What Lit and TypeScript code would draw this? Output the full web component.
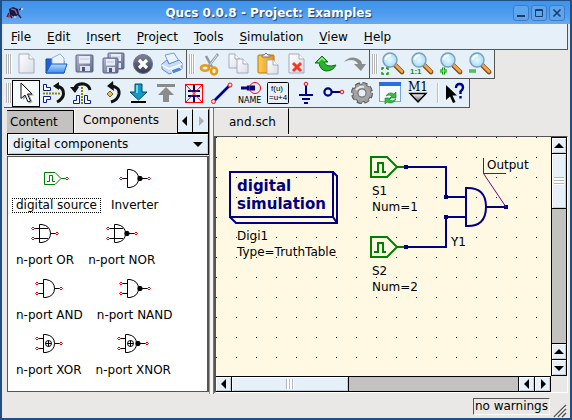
import { LitElement, html, css, svg } from "lit";
import { customElement, property, state } from "lit/decorators.js";
import { classMap } from "lit/directives/class-map.js";

type Tool = { name: string; art: unknown };

const lens = (mark: unknown) => svg`
  <path d="M14 13 L21 20" stroke="#8a4a10" stroke-width="4.6" stroke-linecap="round"/>
  <path d="M14.500 13 L21 19.500" stroke="#f0a848" stroke-width="2.600" stroke-linecap="round"/>
  <circle cx="9" cy="8" r="7" fill="url(#glass)" stroke="#7d9db8" stroke-width="1.400"/>
  <path d="M4.500 8 A5 5 0 0 1 10 3.500" fill="none" stroke="#fff" stroke-width="2"/>
  ${mark}`;

const sheet = (x: number, y: number, w: number, h: number) => svg`
  <path d="M${x} ${y} h${w - 5} l5 5 v${h - 5} h${-w} z" fill="url(#paper)" stroke="#a3a9c2" stroke-width="1"/>
  <path d="M${x + w - 5} ${y} v5 h5" fill="#fff" stroke="#a3a9c2" stroke-width="1"/>`;

const floppy = (x: number, y: number, s: number) => svg`
  <rect x="${x}" y="${y}" width="${s}" height="${s}" rx="1" fill="url(#steel)" stroke="#5c6488"/>
  <rect x="${x + 3}" y="${y + 1}" width="${s - 6}" height="${s / 2 - 1}" fill="#e9ecf6"/>
  <path d="M${x + 4} ${y + 4} h${s - 8}" stroke="#c0c5d8"/>
  <rect x="${x + 4}" y="${y + s - 6}" width="${s - 7}" height="5" fill="#dfe2ee"/>
  <rect x="${x + 6}" y="${y + s - 5}" width="3" height="4" fill="#4c5478"/>`;

const fileTools: Tool[] = [
  { name: "New", art: sheet(4, 2, 15, 19) },
  { name: "Open", art: svg`
      <path d="M2 21 V7 h6 l2 2 h10 v12 z" fill="#1f62d8" stroke="#1648a8"/>
      <path d="M8 6 L16 2 L20 6 V15 H8 z" fill="#eef4ff" stroke="#94aede"/>
      <path d="M2 21 L7 12 H23 L20 21 z" fill="url(#folder)" stroke="#1c56c4"/>` },
  { name: "Save", art: floppy(3, 3, 17) },
  { name: "Save all", art: svg`${floppy(6, 1, 16)}${floppy(1, 6, 15)}` },
  { name: "Close", art: svg`
      <circle cx="12" cy="12" r="9.500" fill="url(#dark)" stroke="#6e7388"/>
      <path d="M8 8 L16 16 M16 8 L8 16" stroke="#fff" stroke-width="3.200"/>` },
  { name: "Print", art: svg`
      <path d="M5 3 L14 1 L19 9 L9 12 z" fill="#eaf4ff" stroke="#6f9de0"/>
      <path d="M2 12 L7 8 L9 12 L19 8 L22 11 V17 L9 22 L2 17 z" fill="#c6dcfa" stroke="#6488d0"/>
      <path d="M2 13 L9 17 L22 12" fill="none" stroke="#fff" stroke-width="1.500"/>
      <path d="M11 18 L19 15 L23 18 L13 22 z" fill="#4d86e8" stroke="#fff"/>` },
];

const editTools: Tool[] = [
  { name: "Cut", art: svg`
      <path d="M8 4 L14 15 M20 2 L10 15" stroke="#8e98a8" stroke-width="2.600"/>
      <path d="M19 3 L12 13" stroke="#e2e8f0" stroke-width="1"/>
      <ellipse cx="7" cy="16" rx="4" ry="2.800" fill="none" stroke="#e89a10" stroke-width="2.600"/>
      <ellipse cx="16" cy="19" rx="3" ry="3.500" fill="none" stroke="#e89a10" stroke-width="2.600"/>` },
  { name: "Copy", art: svg`${sheet(2, 2, 11, 14)}${sheet(10, 7, 11, 14)}` },
  { name: "Paste", art: svg`
      <rect x="2" y="3" width="16" height="18" rx="1" fill="url(#gold)" stroke="#b87408"/>
      <path d="M6 5 V3 h2 l2 -2 l2 2 h2 v2 z" fill="#eee" stroke="#777"/>
      ${sheet(11, 8, 11, 14)}` },
  { name: "Delete", art: svg`${sheet(4, 2, 15, 19)}
      <path d="M8 11 L16 19 M16 11 L8 19" stroke="#f43a22" stroke-width="3"/>` },
  { name: "Undo", art: svg`
      <path d="M1 11 L8 4 L14 10 H10 Q12 16 22 13 Q19 19 12 19 Q6 18 5 11 z" fill="#28b428" stroke="#0b6e14"/>
      <path d="M4 10 L8 6 L11 9" fill="none" stroke="#98ee88" stroke-width="1.500"/>` },
  { name: "Redo", art: svg`
      <path d="M1 10 Q6 4 13 6 Q19 8 19 12 H23 L18 19 L11 12 H15 Q13 8 8 8 Q4 8 1 10 z" fill="#8c8c8c"/>` },
];

const green = (d: string) => svg`
  <path d="${d}" fill="none" stroke="#0a9a0a" stroke-width="3"/>
  <path d="${d}" fill="none" stroke="#8cf08c" stroke-width="1"/>`;

const zoomTools: Tool[] = [
  { name: "View all", art: lens(svg`<path d="M1 18 V16 H3 M5 16 H7 V18 M7 20 V22 H5 M3 22 H1 V20" fill="none" stroke="#0a9a0a" stroke-width="1.400"/>`) },
  { name: "View 1:1", art: lens(svg`<text class="ratio" x="0" y="22">1:1</text>`) },
  { name: "Zoom in", art: lens(green("M1 19 H8 M4.500 15.500 V22.500")) },
  { name: "Zoom out", art: lens(green("M1 19 H8")) },
];

const drawTools: Tool[] = [
  { name: "Select", art: svg`
      <path d="M8 2 V18 L11.500 14.500 L14.500 21.500 L17.500 20 L14.500 13.500 H19 z" fill="#555" opacity=".5" transform="translate(1 1)"/>
      <path d="M7 2 V17.500 L11 14 L14 21 L16.500 20 L13.500 13 H18 z" fill="#fff" stroke="#111"/>` },
  { name: "Mirror about X axis", art: svg`
      <path d="M1.500 3.500 h3 v3 h4 v3 H1.500 z M1.500 15.500 h7 v3 H4.500 v3 H1.500 z" fill="#fff" stroke="#0a1c9c" stroke-width="1"/>
      <path d="M1 12.500 H18" stroke="#8a8600" stroke-width="2" stroke-dasharray="2 1"/>
      <path d="M14 5 Q22 6 21.500 13 Q21 18 15 21" fill="none" stroke="#111" stroke-width="3"/>
      <path d="M17 1 L11 5 L17 9 z" fill="#111"/>` },
  { name: "Mirror about Y axis", art: svg`
      <path d="M3.500 22.500 v-3 h3 v-5 h3 v8 z M14.500 22.500 v-8 h3 v5 h3 v3 z" fill="#fff" stroke="#0a1c9c" stroke-width="1"/>
      <path d="M12 6 V23" stroke="#8a8600" stroke-width="2" stroke-dasharray="2 1"/>
      <path d="M4 9 Q6 2 14 3 Q19 4 20 9" fill="none" stroke="#111" stroke-width="3"/>
      <path d="M0 6 H9 L5 12 z" fill="#111"/>` },
  { name: "Rotate", art: svg`
      <path d="M13 5 Q22 6 21 13 Q20 19 13 21" fill="none" stroke="#111" stroke-width="3"/>
      <path d="M15 0 L9 5 L16 10 z" fill="#111"/>
      <path d="M12 10 L15 13 L12 16 L9 13 z" fill="#e4c060" stroke="#7a5c10"/>` },
  { name: "Into subcircuit", art: svg`
      <path d="M9 3 H16 V11 H21 L12.500 19 L4 11 H9 z" fill="#109ac8" stroke="#064860"/>
      <path d="M11 4 V12" stroke="#68d8f4" stroke-width="2"/>
      <path d="M5 21 H20" stroke="#000" stroke-width="2"/>` },
  { name: "Pop out", art: svg`<path d="M3 3 H21 V6 H3 z M12 6 L20 14 H15 V21 H9 V14 H4 z" fill="#8b8b8b"/>` },
  { name: "Deactivate", art: svg`
      <path d="M12 3 V10 M12 15 V22 M6 10 H18 M6 15 H18" stroke="#000080" stroke-width="2"/>
      <rect x="3.500" y="3.500" width="17" height="18" fill="none" stroke="#f00"/>
      <path d="M3.500 3.500 L20.500 21.500 M20.500 3.500 L3.500 21.500" stroke="#f00"/>` },
  { name: "Wire", art: svg`
      <path d="M4 20 L20 4" stroke="#000090" stroke-width="2.600"/>
      <circle cx="3.500" cy="20.500" r="2" fill="#fff" stroke="#f00"/>
      <circle cx="20" cy="4" r="2" fill="#fff" stroke="#f00"/>` },
  { name: "Wire label", art: svg`
      <path d="M3 7 H11" stroke="#000080" stroke-width="3"/>
      <path d="M9 7 H17" stroke="#000080" stroke-width="5"/>
      <circle cx="17" cy="7" r="5.500" fill="none" stroke="#f00"/>
      <text class="tiny" x="0" y="22">NAME</text>` },
  { name: "Equation", art: svg`
      <rect x="1.500" y="1.500" width="21" height="21" rx="1" fill="none" stroke="#000" stroke-width="1"/>
      <text class="formula" x="5" y="10">f(u)</text>
      <text class="formula" x="3" y="19">=u+4</text>` },
  { name: "Ground", art: svg`
      <path d="M12 4 V14 M5 14 H19 M8 18 H16 M10 22 H14" stroke="#000090" stroke-width="2"/>
      <circle cx="12" cy="3" r="1.800" fill="#fff" stroke="#f00"/>` },
  { name: "Port", art: svg`
      <circle cx="6" cy="11" r="3.600" fill="none" stroke="#000080" stroke-width="2.200"/>
      <path d="M10 11 H18" stroke="#000080" stroke-width="2"/>
      <circle cx="20" cy="11" r="1.800" fill="#fff" stroke="#f00"/>` },
  { name: "Simulate", art: svg`
      <circle cx="12" cy="12" r="9" fill="none" stroke="#555" stroke-width="4" stroke-dasharray="4.700 2.400"/>
      <circle cx="12" cy="12" r="6.500" fill="none" stroke="#666" stroke-width="6"/>
      <circle cx="12" cy="12" r="9" fill="none" stroke="#999" stroke-width="2" stroke-dasharray="4 3.100"/>
      <circle cx="12" cy="12" r="6.500" fill="none" stroke="#a4a4a4" stroke-width="4"/>
      <path d="M6 9 Q9 5 14 6" fill="none" stroke="#e6e6e6" stroke-width="2"/>` },
  { name: "View data display", art: svg`
      <rect x="1.500" y="1.500" width="21" height="19" fill="#f6faff" stroke="#7aa4e4"/>
      <rect x="1" y="1" width="22" height="4" fill="#2c6be0"/>
      <path d="M8 15 Q11 10 16 13 L18 11 V17 H12 L14 15 Q11 13 8 15 z" fill="#30c040" stroke="#0c8020" stroke-width=".6"/>
      <path d="M18 18 Q15 24 9 21 L7 23 V17 H13 L11 19 Q15 21 18 18 z" fill="#30c040" stroke="#0c8020" stroke-width=".6"/>` },
  { name: "Set marker", art: svg`
      <text class="marker" x="2" y="10">M1</text>
      <path d="M4 12.500 H20 L12 21 z" fill="url(#grey)" stroke="#000" stroke-width="1.400"/>` },
];

const helpTool: Tool = { name: "What's this", art: svg`
  <path d="M3 4 V19 L7 15.500 L10 22 L12.500 21 L9.500 14.500 H14 z" fill="#000"/>
  <path d="M13 7 Q13 3 16.500 3 Q20 3 20 6.500 Q20 8.500 17.500 10.500 V13 M17.500 15 V17.500" fill="none" stroke="#000090" stroke-width="2.400"/>` };

const defs = svg`<defs>
  <linearGradient id="paper" x1="0" y1="0" x2="1" y2="1"><stop offset="0" stop-color="#fff"/><stop offset="1" stop-color="#dcdde6"/></linearGradient>
  <linearGradient id="steel" x1="0" y1="0" x2="1" y2="1"><stop offset="0" stop-color="#b4bcd2"/><stop offset="1" stop-color="#5e6888"/></linearGradient>
  <linearGradient id="folder" x1="0" y1="0" x2="0" y2="1"><stop offset="0" stop-color="#b4dcff"/><stop offset="1" stop-color="#3c8cf0"/></linearGradient>
  <linearGradient id="dark" x1="0" y1="0" x2="0" y2="1"><stop offset="0" stop-color="#80859a"/><stop offset="1" stop-color="#34384e"/></linearGradient>
  <linearGradient id="gold" x1="0" y1="0" x2="1" y2="0"><stop offset="0" stop-color="#ffcf50"/><stop offset="1" stop-color="#e09414"/></linearGradient>
  <linearGradient id="grey" x1="0" y1="0" x2="0" y2="1"><stop offset="0" stop-color="#fff"/><stop offset="1" stop-color="#555"/></linearGradient>
  <radialGradient id="glass"><stop offset="0" stop-color="#e8faff"/><stop offset="1" stop-color="#a4dcf8"/></radialGradient>
</defs>`;

const base = css`
  :host { box-sizing: border-box; }
  *, *::before, *::after { box-sizing: border-box; }
  button, select {
    margin: 0; padding: 0; border: 0; border-radius: 0; background: none;
    color: inherit; font: inherit; appearance: none;
  }
  svg { display: block; flex: none; }
`;

@customElement("tool-strip")
export class ToolStrip extends LitElement {
  @property({ attribute: false }) tools: Tool[] = [];
  @property({ attribute: false }) extra?: Tool;
  @property() active = "";
  @property({ type: Boolean }) compact = false;

  static styles = [base, css`
    :host {
      display: flex; align-items: center; height: 29px;
      background: #e5f0f9; border-right: 1px solid #555; border-bottom: 1px solid #555;
    }
    .grip {
      width: 6px; height: 20px; margin-left: 2px;
      background: repeating-linear-gradient(to right, #b4b4b4 0 1px, #fff 1px 2px);
    }
    .tool { display: grid; place-items: center; width: 29px; height: 27px; }
    .compact { width: 28px; }
    .on { background: #f4f9fd; border: 1px solid #000; }
    .rule { width: 2px; height: 20px; margin: 0 2px 0 5px; background: #b8c0c6; border-right: 1px solid #fff; }
    .tiny { font: 8px "DejaVu Sans", sans-serif; }
    .formula { font: 8px "Liberation Sans", sans-serif; }
    .ratio { font: bold 8px "Liberation Sans", sans-serif; fill: #0a9a0a; }
    .marker { font: 12px "DejaVu Serif", serif; }
  `];

  private button(t: Tool) {
    return html`<button class=${classMap({ tool: true, compact: this.compact, on: t.name === this.active })}
      aria-label=${t.name} @click=${() => this.dispatchEvent(new CustomEvent("pick", { detail: t.name }))}>
      <svg width="24" height="24" viewBox="0 0 24 24">${defs}${t.art}</svg></button>`;
  }

  render() {
    return html`<span class="grip"></span>${this.tools.map((t) => this.button(t))}
      ${this.extra ? html`<span class="rule"></span>${this.button(this.extra)}` : null}`;
  }
}

const arrows: Record<string, string> = {
  left: "M7 0 V10 L2 5 z", right: "M3 0 V10 L8 5 z", up: "M0 7 H10 L5 2 z", down: "M0 3 H10 L5 8 z",
};
const arrow = (dir: string) => html`<svg width="10" height="10" viewBox="0 0 10 10"><path d=${arrows[dir]} fill="currentColor"/></svg>`;

@customElement("scroll-strip")
export class ScrollStrip extends LitElement {
  @property({ type: Boolean, reflect: true }) vertical = false;
  @property({ type: Number }) share = 40;

  static styles = [base, css`
    :host { display: flex; height: 16px; background: #c3c2c0; border: 1px solid #000; border-left-width: 0; }
    :host([vertical]) { flex-direction: column; width: 16px; height: auto; border-left-width: 1px; border-bottom-width: 1px; }
    .step, .thumb {
      display: grid; place-items: center; background: #e5f0f9; color: #000;
      box-shadow: inset 1px 1px #fff, inset -1px -1px #c4d0d8;
    }
    .step { flex: none; width: 16px; height: 14px; border-right: 1px solid #000; }
    .step.end { border-right: 0; border-left: 1px solid #000; width: 16px; }
    .thumb { border-right: 1px solid #000; }
    .space { flex: 1; display: flex; min-width: 0; min-height: 0; }
    .ribs { width: 8px; height: 10px; background: repeating-linear-gradient(to right, #b4b8bc 0 1px, #fff 1px 3px); }
    :host([vertical]) .space { flex-direction: column; }
    :host([vertical]) .step { width: 14px; height: 16px; border-right: 0; border-bottom: 1px solid #000; }
    :host([vertical]) .step.end { border-left: 0; border-bottom: 0; border-top: 1px solid #000; height: 16px; }
    :host([vertical]) .thumb { border-right: 0; border-bottom: 1px solid #000; }
    :host([vertical]) .ribs { width: 10px; height: 8px; background: repeating-linear-gradient(#b4b8bc 0 1px, #fff 1px 3px); }
  `];

  render() {
    const [back, on] = this.vertical ? ["up", "down"] : ["left", "right"];
    return html`
      <button class="step" aria-label=${"Scroll " + back}>${arrow(back)}</button>
      <div class="space"><div class="thumb" style="flex: 0 0 ${this.share}%"><span class="ribs"></span></div></div>
      <button class="step end" aria-label=${"Page " + back}>${arrow(back)}</button>
      <button class="step end" aria-label=${"Scroll " + on}>${arrow(on)}</button>`;
  }
}

type Part = { name: string; kind: "source" | "not" | "or" | "and"; bubble?: boolean; xor?: boolean };
const parts: Part[] = [
  { name: "digital source", kind: "source" },
  { name: "Inverter", kind: "not", bubble: true },
  { name: "n-port OR", kind: "or" },
  { name: "n-port NOR", kind: "or", bubble: true },
  { name: "n-port AND", kind: "and" },
  { name: "n-port NAND", kind: "and", bubble: true },
  { name: "n-port XOR", kind: "and", xor: true },
  { name: "n-port XNOR", kind: "and", bubble: true, xor: true },
];

const pin = (x: number, y: number) => svg`<path d="M${x - 1.5} ${y} l1.500 -1.500 l1.500 1.500 l-1.500 1.500 z" fill="#fff" stroke="#f00000" stroke-width="1"/>`;

function partIcon(p: Part) {
  if (p.kind === "source") {
    return html`<svg width="26" height="20" viewBox="0 0 26 20" fill="none" stroke="#008000">
      <path d="M1.500 4.500 H12 L18 10.500 L12 16.500 H1.500 z M18 10.500 H23 M4 13.500 H6.500 V7.500 H9.500 V13.500 H12"/>${pin(24, 10.5)}</svg>`;
  }
  const end = p.bubble ? 30 : 26;
  const reach = p.kind === "or" ? 17 : 8;
  return html`<svg width=${end + 2} height="20" viewBox="0 0 ${end + 2} 20" fill="none" stroke="#000">
    <path d="M8.500 1.500 H11 Q19.500 3 19.500 10.500 Q19.500 18 11 19.500 H8.500 z"/>
    <path d=${p.kind === "not" ? "M3 10.500 H8" : `M3 5.500 H${reach} M3 15.500 H${reach}`}/>
    <path d="M19.500 10.500 H${end - 1}"/>
    ${p.kind === "not" ? pin(2, 10.5) : svg`${pin(2, 5.5)}${pin(2, 15.5)}`}
    ${pin(end, 10.5)}
    ${p.bubble ? svg`<circle cx="21" cy="10.500" r="2.200" fill="#000"/>` : null}
    ${p.xor ? svg`<circle cx="13.500" cy="10.500" r="3"/><path d="M10.500 10.500 H16.500 M13.500 7.500 V13.500"/>` : null}
  </svg>`;
}

const source = (y: number) => svg`
  <g fill="none" stroke="#008000" stroke-width="2">
    <path d="M155 ${y - 10} H171 L181 ${y} L171 ${y + 10} H155 z M181 ${y} H190"/>
    <path d="M158 ${y + 5} H162 V${y - 4} H167 V${y + 5} H170"/>
  </g>`;

const menus = ["File", "Edit", "Insert", "Project", "Tools", "Simulation", "View", "Help"];

@customElement("app-root")
export class AppRoot extends LitElement {
  @state() private tool = "Select";
  @state() private part = "digital source";

  static styles = [base, css`
    :host {
      display: flex; flex-direction: column; min-height: 100vh;
      font: 12px "DejaVu Sans", sans-serif; color: #000; background: #e9e8e6;
      border: 2px solid #1f4f87; border-top: 0;
    }
    .title {
      display: flex; align-items: center; height: 24px; padding: 0 5px 0 4px;
      background: linear-gradient(#3f93ea, #4c9bee 50%, #66a9f2);
      border-top: 1px solid #1f4f87;
    }
    .title h1 {
      flex: 1; margin: 0; text-align: center;
      font: bold 12px "DejaVu Sans", sans-serif; color: #fff; text-shadow: 1px 1px 1px #16407c;
    }
    .winbtns { display: flex; gap: 2px; }
    .winbtn {
      display: grid; place-items: center; width: 16px; height: 16px;
      background: #5fa5ee; border: 1px solid #3d7cc4; border-radius: 3px;
    }
    .frame { flex: 1; display: flex; flex-direction: column; padding: 0 2px; }
    .menu {
      display: flex; align-items: center; height: 26px; padding-left: 7px; gap: 16px;
      background: #e5f0f9; border-right: 1px solid #555; border-bottom: 1px solid #555;
    }
    .menu u { text-underline-offset: 2px; }
    .bars { display: flex; flex-wrap: wrap; }
    .main { flex: 1; display: flex; min-height: 0; }
    .side { display: flex; flex-direction: column; width: 205px; padding-left: 3px; }
    .tabs { display: flex; align-items: flex-end; height: 25px; }
    .tab { height: 25px; border-left: 1px solid #fff; border-top: 1px solid #fff; text-align: left; }
    .back { width: 67px; height: 23px; padding-left: 3px; background: #c3c2c0; border-right: 1px solid #000; border-top: 1px solid #000; border-left: 0; }
    .front { flex: 1; padding: 0 0 2px 8px; }
    .turn { display: grid; place-items: center; width: 16px; height: 24px; background: #e5f0f9; border: 1px solid #000; border-top-color: #fff; }
    .turn + .turn { border-left: 0; color: #b0b0b0; }
    .pick { position: relative; display: block; height: 22px; }
    .pick select { width: 100%; height: 22px; padding: 0 20px 0 5px; background: #e5f0f9; border: 1px solid #000; box-shadow: inset 1px 1px #fff, inset -1px -1px #c4d0d8; }
    .pick svg { position: absolute; right: 6px; top: 6px; pointer-events: none; }
    .list {
      flex: 1; display: flex; flex-wrap: wrap; align-content: flex-start; gap: 10px 6px;
      margin: 1px 0 2px; padding: 11px 4px 0 4px; background: #fff;
      border: 1px solid #555; border-right-width: 2px;
    }
    .part { display: flex; flex-direction: column; align-items: center; gap: 10px; }
    .label { height: 15px; line-height: 13px; padding: 0 3px; border: 1px solid transparent; }
    .chosen .label { border: 1px dotted #000; }
    .split { width: 5px; background: #f4f4f2; border-left: 1px solid #999; border-right: 1px solid #777; }
    .doc { flex: 1; display: flex; flex-direction: column; min-width: 0; margin-bottom: 1px; }
    .doctab { align-self: flex-start; height: 26px; padding: 0 12px 0 13px; margin: 0 0 2px 2px; border-right: 1px solid #000; border-top: 1px solid #fff; }
    .view {
      flex: 1; display: grid; grid-template: 1fr 16px / 1fr 16px;
      border: 1px solid #555; border-left-width: 2px; border-right-color: #fff; border-bottom-color: #fff;
    }
    .sheet { position: relative; background: #fff9e3; overflow: hidden; }
    .sheet svg { position: absolute; inset: 0; }
    .name { font: bold 15px "DejaVu Sans", sans-serif; fill: #000080; }
    .status { display: flex; justify-content: flex-end; align-items: center; height: 24px; gap: 3px; padding: 1px 1px 0 0; }
    .note { height: 17px; line-height: 15px; padding: 0 1px; border: 1px solid #555; border-right-color: #fff; border-bottom-color: #fff; }
    .size { align-self: flex-end; }
  `];

  private pickTool = (e: CustomEvent<string>) => { this.tool = e.detail; };

  render() {
    return html`
      <header class="title">
        <svg width="18" height="16" viewBox="0 0 18 16">
          <path d="M3 4 L7 2 L12 4 L13 9 L9 12 L4 10 z" fill="#1c1838"/>
          <path d="M5 4 L9 5 L11 9" stroke="#7868a8" fill="none" stroke-width="1.500"/>
          <path d="M13 5 L16 3 M12 9 L15 13 M3 8 L1 12 M4 10 L6 13" stroke="#2c2038" stroke-width="1.500"/>
          <circle cx="3" cy="11" r="1.500" fill="#b83030"/><circle cx="16" cy="4" r="1.200" fill="#d8c8d0"/><circle cx="9" cy="12" r="1.200" fill="#c8b0c8"/>
        </svg>
        <h1>Qucs 0.0.8 - Project: Examples</h1>
        <div class="winbtns">
          ${["M1 8 H9", "M1.500 1.500 H8.500 V8.500 H1.500 z M1 2.500 H9", "M1.500 1.500 L8.500 8.500 M8.500 1.500 L1.500 8.500"].map((d, i) => html`
            <button class="winbtn" aria-label=${["Minimise", "Maximise", "Close"][i]}>
              <svg width="10" height="10" viewBox="0 0 10 10"><path d=${d} fill="none" stroke="#183c70" stroke-width=${[2, 1, 1.6][i]}/></svg>
            </button>`)}
        </div>
      </header>
      <div class="frame">
        <nav class="menu">${menus.map((m) => html`<button><u>${m[0]}</u>${m.slice(1)}</button>`)}</nav>
        <div class="bars">
          <tool-strip .tools=${fileTools}></tool-strip>
          <tool-strip .tools=${editTools}></tool-strip>
          <tool-strip .tools=${zoomTools}></tool-strip>
        </div>
        <div class="bars">
          <tool-strip compact .tools=${drawTools} .extra=${helpTool} .active=${this.tool} @pick=${this.pickTool}></tool-strip>
        </div>
        <main class="main">
          <section class="side">
            <div class="tabs">
              <button class="tab back">Content</button>
              <button class="tab front">Components</button>
              <button class="turn" aria-label="Previous tab">${arrow("left")}</button>
              <button class="turn" aria-label="Next tab">${arrow("right")}</button>
            </div>
            <label class="pick">
              <select aria-label="Component group"><option>digital components</option></select>
              ${arrow("down")}
            </label>
            <div class="list">
              ${parts.map((p) => html`
                <button class=${classMap({ part: true, chosen: p.name === this.part })} @click=${() => { this.part = p.name; }}>
                  ${partIcon(p)}<span class="label">${p.name}</span>
                </button>`)}
            </div>
          </section>
          <div class="split"></div>
          <section class="doc">
            <button class="doctab">and.sch</button>
            <div class="view">
              <div class="sheet">${this.schematic()}</div>
              <scroll-strip vertical .share=${29}></scroll-strip>
              <scroll-strip .share=${41}></scroll-strip>
            </div>
          </section>
        </main>
        <footer class="status">
          <span class="note">no warnings</span>
          <svg class="size" width="14" height="14" viewBox="0 0 14 14">
            <path d="M1 13 L13 1 M5 13 L13 5 M9 13 L13 9" stroke="#555" stroke-width="1.500"/>
            <path d="M2.500 13 L13 2.500 M6.500 13 L13 6.500" stroke="#fff"/>
          </svg>
        </footer>
      </div>`;
  }

  private schematic() {
    return html`<svg width="100%" height="100%">
      <defs><pattern id="dots" width="20" height="20" patternUnits="userSpaceOnUse"><rect width="1" height="1" fill="#000"/></pattern></defs>
      <rect width="100%" height="100%" fill="url(#dots)"/>
      <g fill="none" stroke="#000080" stroke-width="2">
        <path d="M14 35 H117 V80 H14 z M117 35 L121 39 V86 H20 L14 80 M117 80 L121 86"/>
        <path d="M190 30 H230 V60 H250 M190 110 H230 V80 H250"/>
        <path d="M250 51 V89 Q270 90 270 70 Q270 50 250 51 z M270 70 H290"/>
      </g>
      ${source(30)}${source(110)}
      <path d="M188 28 h4 v4 h-4 z M188 108 h4 v4 h-4 z M228 58 h4 v4 h-4 z M228 78 h4 v4 h-4 z M288 68 h4 v4 h-4 z" fill="#000080"/>
      <path d="M267.500 21 V36.500 H290 M267.500 36.500 L290 70" fill="none" stroke="#800080"/>
      <text class="name" x="21" y="54">digital</text>
      <text class="name" x="21" y="72">simulation</text>
      <text x="21" y="103">Digi1</text>
      <text x="21" y="119">Type=TruthTable</text>
      <text x="156" y="58">S1</text>
      <text x="156" y="74">Num=1</text>
      <text x="156" y="138">S2</text>
      <text x="156" y="154">Num=2</text>
      <text x="235" y="109">Y1</text>
      <text x="271" y="32">Output</text>
    </svg>`;
  }
}
